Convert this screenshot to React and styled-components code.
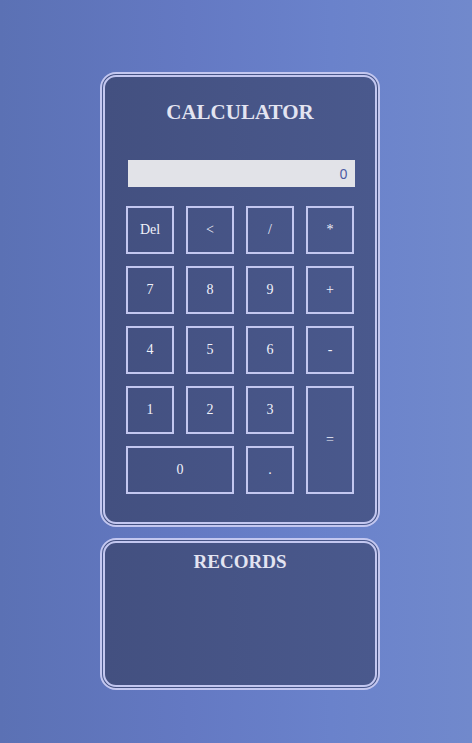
import React from "react";
import styled, { createGlobalStyle } from "styled-components";

const Global = createGlobalStyle`
  html, body { margin: 0; padding: 0; }
  body {
    min-height: 743px;
    background: linear-gradient(90deg, #5b71b4 0%, #6479c3 40%, #6a82cb 70%, #7189cc 100%);
    font-family: "Liberation Serif", "DejaVu Serif", serif;
  }
`;

const Page = styled.div`
  box-sizing: border-box;
  display: flex;
  flex-direction: column;
  align-items: center;
  gap: 11px;
  padding: 72px 0 0 8px;
`;

const Card = styled.section`
  box-sizing: border-box;
  width: 280px;
  height: ${(p) => p.$h}px;
  border: 5px double #c3c7f0;
  border-radius: 16px;
  background: linear-gradient(90deg, #435080 0%, #4a598d 100%);
  display: flex;
  flex-direction: column;
  align-items: center;
`;

const Title = styled.h2`
  margin: ${(p) => p.$mt}px 0 0;
  font-family: "Liberation Serif", "DejaVu Serif", serif;
  font-weight: bold;
  font-size: ${(p) => p.$size}px;
  line-height: 24px;
  color: #e3e4f1;
  letter-spacing: 0;
`;

const Display = styled.div`
  box-sizing: border-box;
  width: 227px;
  height: 27px;
  margin: 36px 0 0 2px;
  background: #e2e3e8;
  color: #4b5ba3;
  font-family: "Noto Sans", "DejaVu Sans", sans-serif;
  font-size: 14px;
  display: flex;
  align-items: center;
  justify-content: flex-end;
  padding-right: 7px;
`;

const Keys = styled.div`
  margin-top: 19px;
  display: grid;
  grid-template-columns: repeat(4, 48px);
  grid-auto-rows: 48px;
  gap: 12px;
`;

const Key = styled.button`
  box-sizing: border-box;
  margin: 0;
  padding: 0;
  border: 2px solid #c3c7f0;
  background: transparent;
  color: #f0f1fa;
  font-family: "Liberation Serif", "DejaVu Serif", serif;
  font-size: 14px;
  grid-column: ${(p) => (p.$wide ? "span 2" : "auto")};
  grid-row: ${(p) => (p.$tall ? "span 2" : "auto")};
  display: flex;
  align-items: center;
  justify-content: center;
  cursor: pointer;
`;

const keys = [
  ["Del"], ["<"], ["/"], ["*"],
  ["7"], ["8"], ["9"], ["+"],
  ["4"], ["5"], ["6"], ["-"],
  ["1"], ["2"], ["3"], ["=", { $tall: true }],
  ["0", { $wide: true }], ["."],
];

export default function App() {
  return (
    <>
      <Global />
      <Page>
        <Card $h={455}>
          <Title $mt={23} $size={21}>CALCULATOR</Title>
          <Display>0</Display>
          <Keys>
            {keys.map(([label, props]) => (
              <Key key={label} {...(props || {})}>{label}</Key>
            ))}
          </Keys>
        </Card>
        <Card $h={152}>
          <Title $mt={7} $size={19}>RECORDS</Title>
        </Card>
      </Page>
    </>
  );
}
